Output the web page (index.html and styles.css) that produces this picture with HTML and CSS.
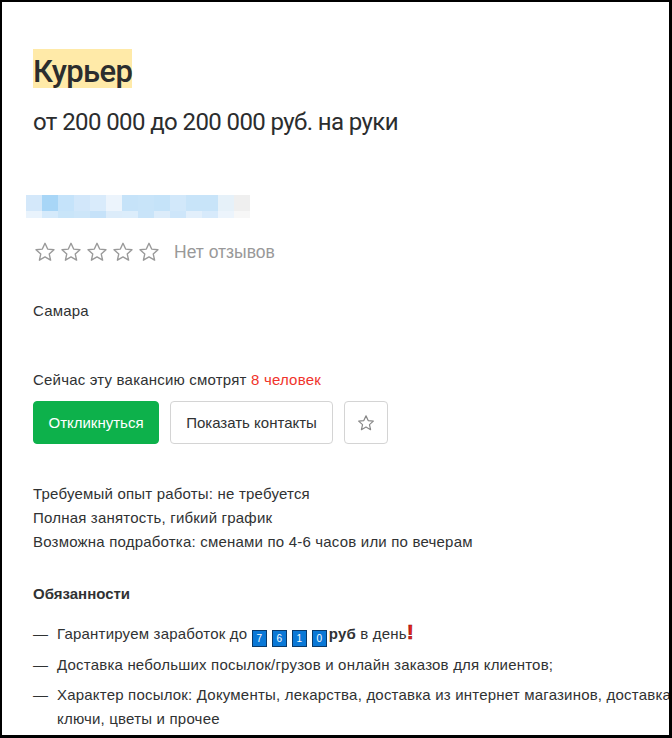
FILE: index.html
```html
<!DOCTYPE html>
<html lang="ru">
<head>
<meta charset="utf-8">
<link rel="stylesheet" href="styles.css">
</head>
<body>
<div class="frame">
  <div class="content">
    <h1 class="title"><span class="hl">Курьер</span></h1>
    <p class="salary">от 200 000 до 200 000 руб. на руки</p>

    <div class="blur">
      <div class="blur-row top">
        <span style="background:#d4e8fa"></span><span style="background:#a8d6f7"></span><span style="background:#c5e3fa"></span><span style="background:#d2e7fa"></span><span style="background:#d9ebfb"></span><span style="background:#ecf4fc"></span><span style="background:#c6e3f9"></span><span style="background:#c8e4f9"></span><span style="background:#c5e3f9"></span><span style="background:#d2e8fa"></span><span style="background:#c8e4f9"></span><span style="background:#c8e4f9"></span><span style="background:#e6f1f9"></span><span style="background:#efefef"></span>
      </div>
      <div class="blur-row bottom">
        <span style="background:#e9f3fc"></span><span style="background:#d5eafb"></span><span style="background:#c9e5f9"></span><span style="background:#cde6f9"></span><span style="background:#c6e2f9"></span><span style="background:#dcecfa"></span><span style="background:#dcedfb"></span><span style="background:#c9e4f9"></span><span style="background:#dcecfa"></span><span style="background:#cee6fa"></span><span style="background:#e2effb"></span><span style="background:#d7eafb"></span><span style="background:#ecf4fc"></span><span style="background:#f7f7f7"></span>
      </div>
    </div>

    <div class="rating">
      <div class="stars">
        <svg class="star" viewBox="0 0 24 24"><path d="M12 2.5l2.9 6.3 6.9.7-5.2 4.6 1.5 6.8L12 17.4l-6.1 3.5 1.5-6.8-5.2-4.6 6.9-.7z"/></svg>
        <svg class="star" viewBox="0 0 24 24"><path d="M12 2.5l2.9 6.3 6.9.7-5.2 4.6 1.5 6.8L12 17.4l-6.1 3.5 1.5-6.8-5.2-4.6 6.9-.7z"/></svg>
        <svg class="star" viewBox="0 0 24 24"><path d="M12 2.5l2.9 6.3 6.9.7-5.2 4.6 1.5 6.8L12 17.4l-6.1 3.5 1.5-6.8-5.2-4.6 6.9-.7z"/></svg>
        <svg class="star" viewBox="0 0 24 24"><path d="M12 2.5l2.9 6.3 6.9.7-5.2 4.6 1.5 6.8L12 17.4l-6.1 3.5 1.5-6.8-5.2-4.6 6.9-.7z"/></svg>
        <svg class="star" viewBox="0 0 24 24"><path d="M12 2.5l2.9 6.3 6.9.7-5.2 4.6 1.5 6.8L12 17.4l-6.1 3.5 1.5-6.8-5.2-4.6 6.9-.7z"/></svg>
      </div>
      <span class="reviews">Нет отзывов</span>
    </div>

    <p class="city">Самара</p>

    <p class="watching">Сейчас эту вакансию смотрят <span class="red">8 человек</span></p>

    <div class="actions">
      <button class="btn btn-green">Откликнуться</button>
      <button class="btn btn-white">Показать контакты</button>
      <button class="btn btn-icon"><svg class="fav" viewBox="0 0 24 24"><path d="M12 2.5l2.9 6.3 6.9.7-5.2 4.6 1.5 6.8L12 17.4l-6.1 3.5 1.5-6.8-5.2-4.6 6.9-.7z"/></svg></button>
    </div>

    <div class="conditions">
      <p>Требуемый опыт работы: не требуется</p>
      <p>Полная занятость, гибкий график</p>
      <p>Возможна подработка: сменами по 4-6 часов или по вечерам</p>
    </div>

    <h2 class="section">Обязанности</h2>
    <ul class="duties">
      <li><span class="dash">—</span><span class="li-text">Гарантируем заработок до <span class="key">7</span><span class="key">6</span><span class="key">1</span><span class="key last">0</span><b>руб</b> в день<span class="excl">!</span></span></li>
      <li><span class="dash">—</span><span class="li-text">Доставка небольших посылок/грузов и онлайн заказов для клиентов;</span></li>
      <li><span class="dash">—</span><span class="li-text">Характер посылок: Документы, лекарства, доставка из интернет магазинов, доставка ключи, цветы и прочее</span></li>
    </ul>
  </div>
</div>
</body>
</html>
```

FILE: styles.css
```css
* { box-sizing: border-box; }
html, body { margin: 0; padding: 0; background: #fff; }
body {
  font-family: "Liberation Sans", Arial, sans-serif;
  color: #303233;
}
.frame {
  width: 672px;
  height: 738px;
  border-style: solid;
  border-color: #000;
  border-width: 2px 3px 3px 2px;
  overflow: hidden;
}
.content {
  width: 720px;
  padding: 47px 0 0 31px;
}
.title {
  margin: 0;
  font-family: Roboto, "Liberation Sans", sans-serif;
  font-weight: 500;
  font-size: 31px;
  line-height: 39px;
  letter-spacing: -0.6px;
  color: #2b2d2e;
}
.hl {
  background: #ffeaa8;
  display: inline-block;
  height: 39px;
  line-height: 45px;
}
.salary {
  margin: 16px 0 0;
  font-family: Roboto, "Liberation Sans", sans-serif;
  font-size: 24px;
  line-height: 30px;
  letter-spacing: -0.6px;
  color: #2b2d2e;
}
.blur {
  margin: 58px 0 0 -7px;
  display: flex;
  flex-direction: column;
}
.blur-row { display: flex; }
.blur-row span { width: 16px; display: block; }
.blur-row.top span { height: 16px; }
.blur-row.bottom span { height: 7px; }
.rating {
  margin-top: 23px;
  display: flex;
  align-items: center;
  gap: 14px;
  height: 22px;
}
.stars { display: flex; gap: 4px; margin-left: 1px; }
.star { width: 22px; height: 22px; display: block; }
.star path, .fav path {
  fill: none;
  stroke: #999;
  stroke-width: 1.5;
  stroke-linejoin: round;
}
.reviews {
  font-size: 17.5px;
  color: #999;
}
.city {
  margin: 36px 0 0;
  font-size: 15px;
  letter-spacing: 0.2px;
  line-height: 24px;
}
.watching {
  margin: 45px 0 0;
  font-size: 15px;
  letter-spacing: 0.2px;
  line-height: 24px;
}
.red { color: #f0342b; }
.actions {
  margin-top: 9px;
  display: flex;
  gap: 11px;
}
.btn {
  height: 43px;
  border-radius: 4px;
  font-family: "Liberation Sans", Arial, sans-serif;
  font-size: 15px;
  padding: 0 14px;
  cursor: pointer;
}
.btn-green {
  background: #0db14b;
  border: 1px solid #0db14b;
  color: #fff;
  width: 126px;
}
.btn-white {
  background: #fff;
  border: 1px solid #d4d4d4;
  color: #303233;
  width: 163px;
}
.btn-icon {
  background: #fff;
  border: 1px solid #d4d4d4;
  width: 44px;
  padding: 0;
  display: flex;
  align-items: center;
  justify-content: center;
}
.fav { width: 18px; height: 18px; display: block; }
.fav path { stroke: #888; stroke-width: 1.6; }
.conditions {
  margin-top: 38px;
  font-size: 15px;
  letter-spacing: 0.2px;
  line-height: 24px;
}
.conditions p { margin: 0; }
.section {
  margin: 28px 0 0;
  font-size: 15px;
  line-height: 24px;
  font-weight: bold;
}
.duties {
  list-style: none;
  margin: 16px 0 0;
  padding: 0;
  font-size: 15px;
  letter-spacing: 0.2px;
  line-height: 24px;
}
.duties li {
  display: flex;
  margin-bottom: 6px;
}
.dash { width: 24px; flex: none; }
.li-text { width: 630px; }
.key {
  display: inline-block;
  width: 15px;
  height: 17px;
  margin-right: 5px;
  background: #0a78d6;
  border: 1px solid #0a3a6a;
  color: #fff;
  font-size: 10px;
  letter-spacing: 0;
  line-height: 15px;
  text-align: center;
  vertical-align: -3px;
}
.key.last { margin-right: 2px; }
.excl {
  color: #e8231c;
  font-weight: 900;
  font-size: 21px;
  line-height: 14px;
  -webkit-text-stroke: 0.6px #8a1010;
}
```
